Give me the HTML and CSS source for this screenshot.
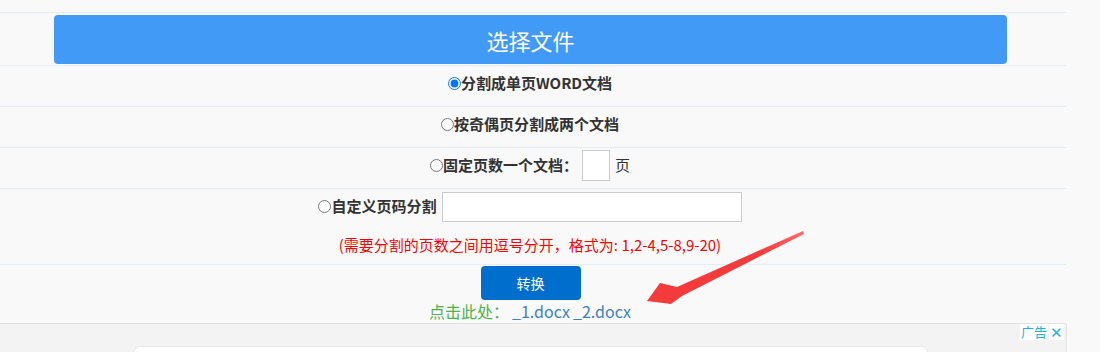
FILE: index.html
```html
<!DOCTYPE html>
<html lang="zh-CN">
<head>
    <meta charset="UTF-8">
    <meta name="viewport" content="width=device-width, initial-scale=1.0">
    <title>Word文档分割</title>
    <link rel="stylesheet" href="styles.css">
</head>
<body>
    <div id="main">
        <div id="rows">
            <div class="row row_top"></div>
            <div class="row row_pick">
                <button id="pick_file">选择文件</button>
            </div>
            <div class="row row_opt">
                <label class="opt"><input type="radio" name="mode" checked>分割成单页WORD文档</label>
            </div>
            <div class="row row_opt">
                <label class="opt"><input type="radio" name="mode">按奇偶页分割成两个文档</label>
            </div>
            <div class="row row_opt">
                <label class="opt"><input type="radio" name="mode">固定页数一个文档：</label>
                <input type="text" id="page_count">
                <span class="unit">页</span>
            </div>
            <div class="row row_custom">
                <div class="custom_line">
                    <label class="opt"><input type="radio" name="mode">自定义页码分割</label>
                    <input type="text" id="page_ranges">
                </div>
                <span class="hint">(需要分割的页数之间用逗号分开，格式为: 1,2-4,5-8,9-20)</span>
            </div>
            <div class="row row_convert">
                <button id="convert">转换</button>
                <div class="result">
                    <span class="result_label">点击此处：</span>
                    <a href="#">_1.docx</a>
                    <a href="#">_2.docx</a>
                </div>
            </div>
        </div>
        <div id="ad">
            <div class="ad_card"></div>
            <div class="ad_tag"><span>广告</span><span class="ad_close">✕</span></div>
        </div>
        <svg class="arrow" width="180" height="90" viewBox="640 225 180 90">
            <defs>
                <linearGradient id="arrow_fade" x1="1" y1="0" x2="0" y2="1">
                    <stop offset="0" stop-color="#ff6b6b"/>
                    <stop offset="0.3" stop-color="#f43b3b"/>
                    <stop offset="1" stop-color="#f43b3b"/>
                </linearGradient>
            </defs>
            <polygon points="803,231 677,287 660,283 647,301 671,304 682,296 804,234" fill="url(#arrow_fade)"/>
        </svg>
    </div>
</body>
</html>
```

FILE: styles.css
```css
* {
    margin: 0;
    padding: 0;
    box-sizing: border-box;
}

body {
    width: 100%;
    height: 352px;
    overflow: hidden;
    background-color: #f9f9f9;
    font-family: "Noto Sans CJK SC", "Noto Sans", sans-serif;
    font-size: 15px;
    color: #333;
}

#main {
    position: relative;
    width: 100%;
}

#rows {
    width: 1066px;
}

.row {
    display: flex;
    justify-content: center;
    align-items: center;
    padding-right: 6px;
    border-bottom: 1px solid #e4edf5;
}

.row_top {
    height: 13px;
}

.row_pick {
    height: 53px;
    padding-top: 2px;
    padding-bottom: 2px;
    align-items: flex-start;
}

#pick_file {
    width: 953px;
    height: 49px;
    margin-left: 1px;
    border: none;
    border-radius: 4px;
    background-color: #409af6;
    color: #fff;
    font-family: inherit;
    font-size: 22px;
    cursor: pointer;
}

.row_opt {
    height: 41px;
    padding-bottom: 6px;
}

.opt {
    display: flex;
    align-items: center;
    font-weight: bold;
    line-height: 20px;
    cursor: pointer;
}

.opt > input {
    width: 13px;
    height: 13px;
    margin: 0;
    cursor: pointer;
}

#page_count {
    align-self: flex-start;
    width: 28px;
    height: 31px;
    margin: 2px 0 0 4px;
    border: 1px solid #ccc;
    background-color: #fff;
}

.unit {
    margin-left: 5px;
    line-height: 20px;
}

.row_custom {
    height: 76px;
    flex-direction: column;
    justify-content: flex-start;
    padding-top: 3px;
}

.custom_line {
    display: flex;
    align-items: center;
    gap: 5px;
}

.custom_line > .opt {
    margin-top: -2px;
}

#page_ranges {
    width: 300px;
    height: 30px;
    border: 1px solid #ccc;
    background-color: #fff;
}

.hint {
    margin-top: 13px;
    line-height: 20px;
    color: #f00;
}

.row_convert {
    height: 59px;
    flex-direction: column;
    justify-content: flex-start;
    padding-top: 1px;
    border-bottom-color: #e3e3e3;
}

#convert {
    width: 100px;
    height: 34px;
    margin-left: 1px;
    border: none;
    border-radius: 4px;
    background-color: #006ecd;
    color: #fff;
    font-family: inherit;
    font-size: 14px;
    cursor: pointer;
}

.result {
    display: flex;
    gap: 3px;
    font-size: 16px;
    line-height: 22px;
}

.result_label {
    color: #4cb44c;
}

.result > a {
    color: #3b82c4;
    text-decoration: none;
}

#ad {
    position: relative;
    width: 1067px;
    height: 28px;
    background-color: #f3f3f3;
    border-right: 1px solid #e3e3e3;
}

.ad_card {
    position: absolute;
    left: 134px;
    top: 22px;
    width: 794px;
    height: 20px;
    border: 1px solid #e8e8e8;
    border-radius: 6px;
    background-color: #fff;
}

.ad_tag {
    position: absolute;
    right: 2px;
    top: 0;
    display: flex;
    gap: 1px;
    font-size: 13px;
    line-height: 16px;
    color: #1cb4dd;
}

.ad_tag > span {
    padding: 0 1px;
    background-color: #fff;
}

.ad_close {
    font-size: 15px;
}

.arrow {
    position: absolute;
    left: 640px;
    top: 225px;
}
```
